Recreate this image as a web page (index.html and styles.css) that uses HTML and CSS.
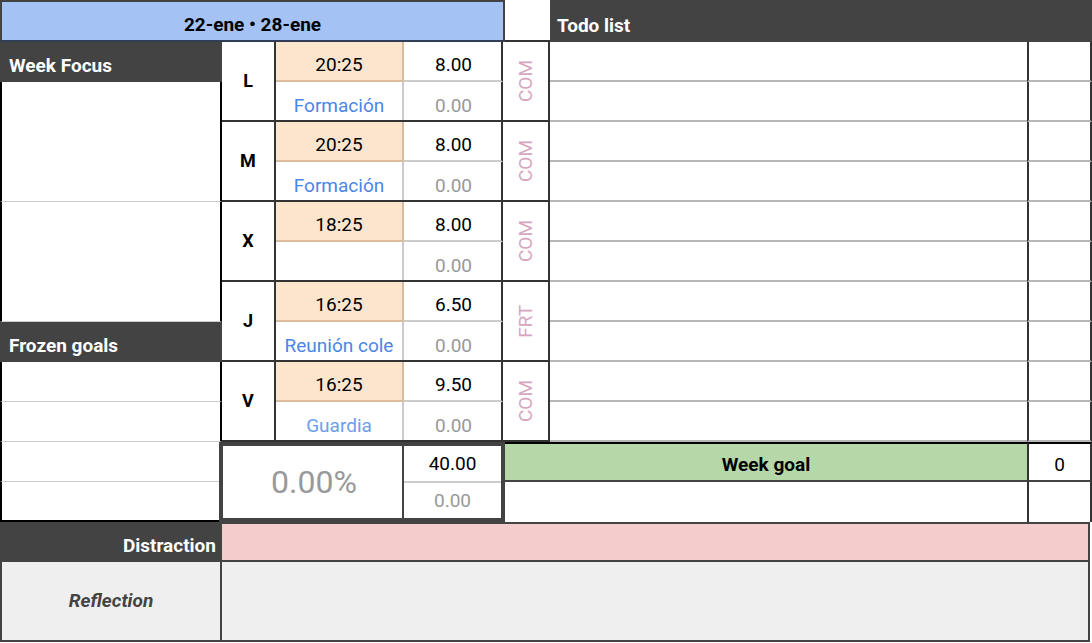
FILE: index.html
```html
<!DOCTYPE html>
<html lang="es">

<head>
    <meta charset="UTF-8">
    <meta name="viewport" content="width=device-width, initial-scale=1.0">
    <title>Week planner</title>
    <link rel="stylesheet" href="styles.css">
</head>

<body>
    <div class="sheet">
        <div class="head-row">
            <div class="range">22-ene • 28-ene</div>
            <div class="spacer"></div>
            <div class="todo-head">Todo list</div>
        </div>

        <div class="middle">
            <div class="side">
                <div class="label">Week Focus</div>
                <div class="note tall"></div>
                <div class="note tall"></div>
                <div class="label">Frozen goals</div>
                <div class="note"></div>
                <div class="note"></div>
                <div class="note"></div>
                <div class="note last"></div>
            </div>

            <div class="main">
                <div class="upper">
                    <div class="days">
                        <div class="day">
                            <div class="letter">L</div>
                            <div class="time">20:25</div>
                            <div class="hours">8.00</div>
                            <div class="tag"><span>COM</span></div>
                            <div class="event">Formación</div>
                            <div class="hours muted">0.00</div>
                        </div>
                        <div class="day">
                            <div class="letter">M</div>
                            <div class="time">20:25</div>
                            <div class="hours">8.00</div>
                            <div class="tag"><span>COM</span></div>
                            <div class="event">Formación</div>
                            <div class="hours muted">0.00</div>
                        </div>
                        <div class="day">
                            <div class="letter">X</div>
                            <div class="time">18:25</div>
                            <div class="hours">8.00</div>
                            <div class="tag"><span>COM</span></div>
                            <div class="event"></div>
                            <div class="hours muted">0.00</div>
                        </div>
                        <div class="day">
                            <div class="letter">J</div>
                            <div class="time">16:25</div>
                            <div class="hours">6.50</div>
                            <div class="tag"><span>FRT</span></div>
                            <div class="event">Reunión cole</div>
                            <div class="hours muted">0.00</div>
                        </div>
                        <div class="day">
                            <div class="letter">V</div>
                            <div class="time">16:25</div>
                            <div class="hours">9.50</div>
                            <div class="tag"><span>COM</span></div>
                            <div class="event light">Guardia</div>
                            <div class="hours muted">0.00</div>
                        </div>
                    </div>

                    <div class="todo">
                        <div class="todo-row"><div class="task"></div><div class="check"></div></div>
                        <div class="todo-row"><div class="task"></div><div class="check"></div></div>
                        <div class="todo-row"><div class="task"></div><div class="check"></div></div>
                        <div class="todo-row"><div class="task"></div><div class="check"></div></div>
                        <div class="todo-row"><div class="task"></div><div class="check"></div></div>
                        <div class="todo-row"><div class="task"></div><div class="check"></div></div>
                        <div class="todo-row"><div class="task"></div><div class="check"></div></div>
                        <div class="todo-row"><div class="task"></div><div class="check"></div></div>
                        <div class="todo-row"><div class="task"></div><div class="check"></div></div>
                        <div class="todo-row"><div class="task"></div><div class="check"></div></div>
                    </div>
                </div>

                <div class="lower">
                    <div class="totals">
                        <div class="percent">0.00%</div>
                        <div class="sums">
                            <div class="sum">40.00</div>
                            <div class="sum muted">0.00</div>
                        </div>
                    </div>
                    <div class="goal">
                        <div class="goal-row">
                            <div class="goal-label">Week goal</div>
                            <div class="goal-val first">0</div>
                        </div>
                        <div class="goal-row">
                            <div class="goal-blank"></div>
                            <div class="goal-val"></div>
                        </div>
                    </div>
                </div>
            </div>
        </div>

        <div class="foot-row distraction">
            <div class="foot-label">Distraction</div>
            <div class="foot-cell"></div>
        </div>
        <div class="foot-row reflection">
            <div class="foot-label">Reflection</div>
            <div class="foot-cell"></div>
        </div>
    </div>
</body>

</html>
```

FILE: styles.css
```css
* {
    box-sizing: border-box;
    margin: 0;
    padding: 0;
    font-family: Roboto, "Liberation Sans", sans-serif;
}

body {
    background: #ffffff;
    color: #000000;
    font-size: 19px;
    line-height: 22px;
}

.sheet {
    width: 1092px;
}

/* header row */
.head-row {
    display: flex;
    height: 42px;
}

.range {
    width: 505px;
    background: #a4c2f4;
    border: 2px solid #434343;
    border-bottom-color: #2f3d56;
    font-weight: bold;
    display: flex;
    align-items: flex-end;
    justify-content: center;
    padding-bottom: 4px;
}

.spacer {
    width: 45px;
    border-bottom: 2px solid #333333;
}

.todo-head {
    width: 542px;
    background: #434343;
    color: #ffffff;
    font-weight: bold;
    display: flex;
    align-items: flex-end;
    padding: 0 0 5px 7px;
    border-top: 2px solid #434343;
}

/* middle block */
.middle {
    display: flex;
}

.side {
    width: 222px;
    display: flex;
    flex-direction: column;
}

.label {
    height: 40px;
    background: #434343;
    color: #ffffff;
    font-weight: bold;
    display: flex;
    align-items: flex-end;
    padding: 0 0 5px 9px;
}

.note {
    height: 40px;
    border-left: 2px solid #000000;
    border-right: 2px solid #000000;
    border-bottom: 1px solid #cccccc;
}

.note.tall {
    height: 120px;
}

.note.last {
    border-bottom: 2px solid #000000;
}

.main {
    width: 870px;
    display: flex;
    flex-direction: column;
}

.upper {
    display: flex;
    height: 400px;
}

.days {
    width: 328px;
}

.day {
    height: 80px;
    display: grid;
    grid-template-columns: 54px 128px 99px 47px;
    grid-template-rows: 40px 38px;
    border-bottom: 2px solid #333333;
}

.letter {
    grid-row: 1 / 3;
    display: flex;
    align-items: center;
    justify-content: center;
    font-weight: bold;
    font-size: 18px;
    border-right: 2px solid #333333;
}

.time {
    background: #fce5cd;
    border-right: 2px solid #d9bd9c;
    border-bottom: 2px solid #d9bd9c;
    display: flex;
    align-items: flex-end;
    justify-content: center;
    padding-bottom: 4px;
}

.hours {
    display: flex;
    align-items: flex-end;
    justify-content: flex-end;
    padding: 0 29px 4px 0;
    border-right: 2px solid #333333;
    border-bottom: 2px solid #cccccc;
}

.hours.muted {
    color: #999999;
    border-bottom: none;
    padding-bottom: 3px;
}

.tag {
    grid-row: 1 / 3;
    grid-column: 4;
    display: flex;
    align-items: center;
    justify-content: center;
    border-right: 2px solid #333333;
    color: #d5a6bd;
}

.tag span {
    writing-mode: vertical-rl;
    transform: rotate(180deg);
}

.event {
    color: #4a86e8;
    display: flex;
    align-items: flex-end;
    justify-content: center;
    padding-bottom: 3px;
    border-right: 2px solid #cccccc;
}

.event.light {
    color: #6d9eeb;
}

.todo {
    width: 542px;
}

.todo-row {
    display: flex;
    height: 40px;
}

.task {
    width: 477px;
    border-bottom: 2px solid #b7b7b7;
}

.check {
    width: 65px;
    border-left: 2px solid #333333;
    border-right: 2px solid #333333;
    border-bottom: 2px solid #b7b7b7;
}

/* totals + goal */
.lower {
    display: flex;
    height: 80px;
}

.totals {
    width: 286px;
    margin-left: -3px;
    display: flex;
    border: 4px solid #434343;
    background: #ffffff;
}

.percent {
    width: 181px;
    border-right: 2px solid #434343;
    display: flex;
    align-items: center;
    justify-content: center;
    font-size: 32px;
    line-height: 36px;
    color: #999999;
    padding-left: 3px;
}

.sums {
    flex: 1;
    display: flex;
    flex-direction: column;
}

.sum {
    flex: 1;
    display: flex;
    align-items: center;
    justify-content: center;
}

.sum:first-child {
    border-bottom: 2px solid #cccccc;
}

.sum.muted {
    color: #999999;
}

.goal {
    width: 587px;
}

.goal-row {
    display: flex;
    height: 40px;
}

.goal-label {
    width: 522px;
    background: #b6d7a8;
    border-top: 2px solid #000000;
    border-bottom: 2px solid #434343;
    font-weight: bold;
    display: flex;
    align-items: center;
    justify-content: center;
    padding-top: 5px;
}

.goal-blank {
    width: 522px;
}

.goal-val {
    width: 65px;
    border-left: 2px solid #333333;
    border-right: 2px solid #333333;
    display: flex;
    align-items: center;
    justify-content: center;
}

.goal-val.first {
    border-top: 2px solid #000000;
    border-bottom: 2px solid #434343;
    padding-top: 5px;
}

/* footer rows */
.foot-row {
    display: flex;
}

.foot-label {
    width: 222px;
    font-weight: bold;
    display: flex;
}

.foot-cell {
    width: 868px;
    border-right: 2px solid #434343;
}

.distraction {
    height: 40px;
}

.distraction .foot-label {
    background: #434343;
    color: #ffffff;
    justify-content: flex-end;
    align-items: flex-end;
    padding: 0 6px 5px 0;
}

.distraction .foot-cell {
    background: #f4cccc;
    border-top: 2px solid #434343;
    border-bottom: 2px solid #434343;
}

.reflection {
    height: 80px;
}

.reflection .foot-label {
    background: #efefef;
    color: #434343;
    font-style: italic;
    border-left: 2px solid #434343;
    border-right: 2px solid #434343;
    border-bottom: 2px solid #434343;
    align-items: center;
    justify-content: center;
}

.reflection .foot-cell {
    background: #efefef;
    border-bottom: 2px solid #434343;
}
```
